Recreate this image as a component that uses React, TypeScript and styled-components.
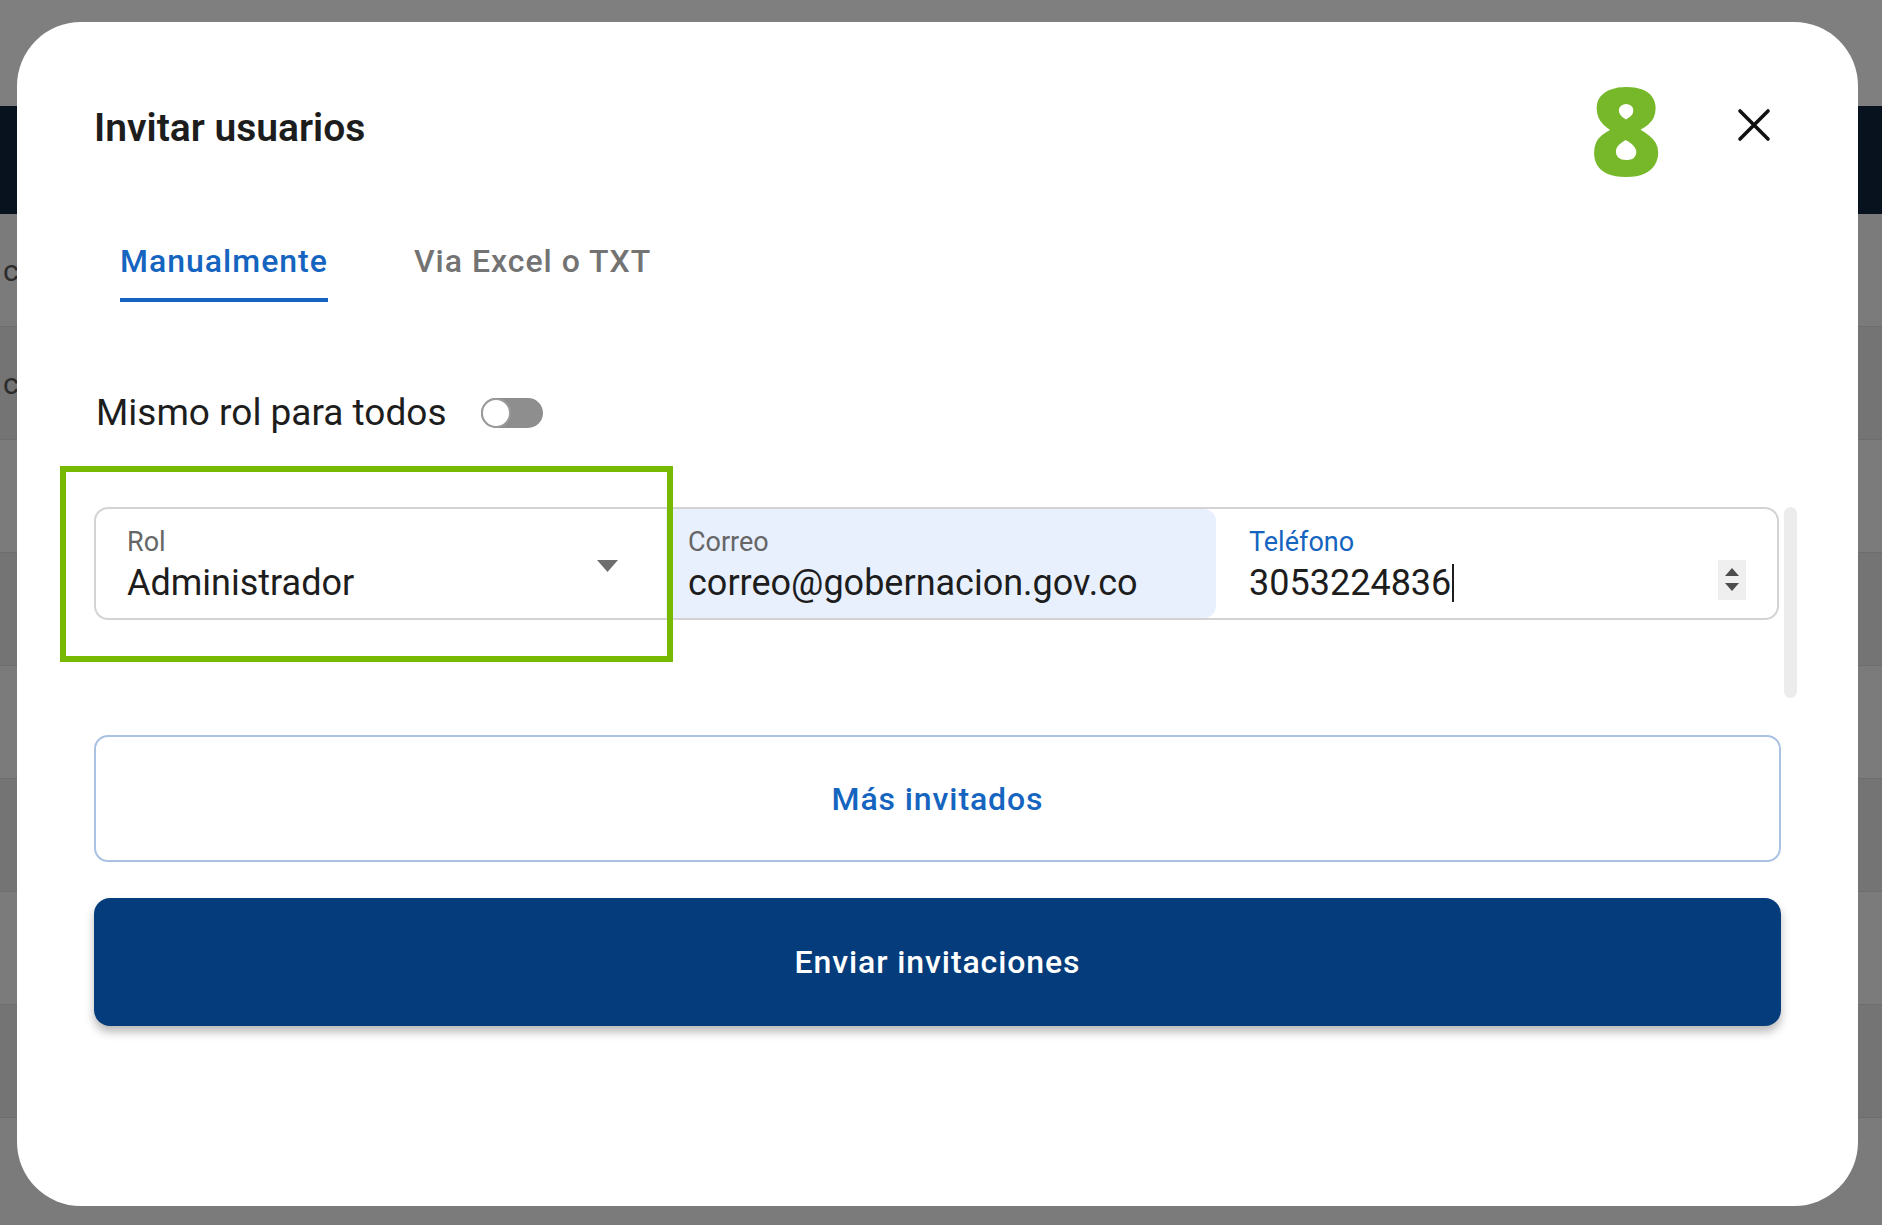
import React from 'react';
import styled, { createGlobalStyle } from 'styled-components';

const GlobalStyle = createGlobalStyle`
  html, body {
    margin: 0;
    padding: 0;
    background: #7f7f7f;
  }
  * {
    box-sizing: border-box;
  }
`;

const Page = styled.div`
  position: relative;
  width: 1882px;
  height: 1225px;
  overflow: hidden;
  background: #7f7f7f;
  display: flex;
  flex-direction: column;
  font-family: Roboto, 'Noto Sans', sans-serif;
`;

const TopStrip = styled.div`
  height: 106px;
  flex-shrink: 0;
`;

const HeaderBand = styled.div`
  height: 108px;
  flex-shrink: 0;
  background: #08111e;
`;

const BgRow = styled.div<{ $dark: boolean }>`
  height: 113px;
  flex-shrink: 0;
  display: flex;
  align-items: center;
  padding-left: 3px;
  background: ${(p) => (p.$dark ? '#747474' : '#7b7b7b')};
  border-bottom: 1px solid #6d6d6d;
  font-size: 30px;
  color: #2c2c2c;
`;

const Modal = styled.div`
  position: absolute;
  left: 17px;
  top: 22px;
  width: 1841px;
  height: 1184px;
  border-radius: 64px;
  background: #ffffff;
  padding: 0 77px;
  display: flex;
  flex-direction: column;
`;

const Header = styled.div`
  margin-top: 56px;
  height: 100px;
  display: flex;
  align-items: center;
`;

const Title = styled.h2`
  margin: 0;
  flex: 1;
  font-size: 39px;
  font-weight: 600;
  color: #1d1d1d;
`;

const StepNumber = styled.span`
  font-family: 'Open Sans', Roboto, sans-serif;
  font-size: 123px;
  font-weight: 800;
  line-height: 1;
  color: #76b82a;
  margin-top: 0;
  margin-right: 68px;
`;

const CloseButton = styled.button`
  width: 48px;
  height: 48px;
  border: none;
  background: transparent;
  padding: 0;
  display: flex;
  align-items: center;
  justify-content: center;
  margin-right: 3px;
  margin-top: -6px;
  cursor: pointer;
`;

const Tabs = styled.div`
  margin-top: 46px;
  margin-left: 26px;
  display: flex;
  gap: 86px;
`;

const Tab = styled.button<{ $active?: boolean }>`
  height: 78px;
  padding: 0;
  border: none;
  background: transparent;
  border-bottom: 4px solid ${(p) => (p.$active ? '#1565c0' : 'transparent')};
  font-family: Roboto, sans-serif;
  font-size: 32px;
  font-weight: 500;
  letter-spacing: 1px;
  color: ${(p) => (p.$active ? '#1565c0' : '#737373')};
  cursor: pointer;
`;

const ToggleRow = styled.div`
  margin-top: 85px;
  margin-left: 2px;
  height: 50px;
  display: flex;
  align-items: center;
  gap: 34px;
  font-size: 37px;
  color: #1d1d1d;
`;

const Switch = styled.span`
  width: 62px;
  height: 30px;
  border-radius: 15px;
  background: #8e8e8e;
  display: flex;
  align-items: center;
  margin-top: 2px;
`;

const Thumb = styled.span`
  width: 30px;
  height: 30px;
  border-radius: 50%;
  background: #ffffff;
  border: 2px solid #9a9a9a;
`;

const FieldsArea = styled.div`
  margin-top: 70px;
  margin-right: -16px;
  height: 191px;
  display: flex;
  gap: 5px;
`;

const FieldRow = styled.div`
  flex: 1;
  height: 113px;
  display: flex;
  border: 2px solid #d3d3d3;
  border-radius: 14px;
  overflow: hidden;
`;

const Cell = styled.div<{ $width?: number; $filled?: boolean; $pad: number }>`
  ${(p) => (p.$width ? `width: ${p.$width}px; flex-shrink: 0;` : 'flex: 1;')}
  display: flex;
  align-items: center;
  padding-left: ${(p) => p.$pad}px;
  padding-right: 31px;
  background: ${(p) => (p.$filled ? '#e8f0fe' : 'transparent')};
  border-radius: ${(p) => (p.$filled ? '0 12px 12px 0' : '0')};
`;

const FieldText = styled.div`
  flex: 1;
  display: flex;
  flex-direction: column;
  padding-top: 4px;
`;

const Label = styled.span<{ $focused?: boolean }>`
  font-size: 27px;
  line-height: 30px;
  color: ${(p) => (p.$focused ? '#1565c0' : '#666666')};
`;

const Value = styled.span`
  margin-top: 5px;
  font-size: 36px;
  line-height: 42px;
  color: #1d1d1d;
  display: flex;
  align-items: center;
`;

const Caret = styled.span`
  width: 2px;
  height: 38px;
  background: #1d1d1d;
  margin-left: 1px;
`;

const DropArrow = styled.span`
  margin-right: 17px;
  margin-top: 4px;
  display: flex;
`;

const Spinner = styled.span`
  width: 28px;
  height: 40px;
  margin-top: 32px;
  background: #efefef;
  display: flex;
  flex-direction: column;
  align-items: center;
  justify-content: center;
  gap: 7px;
`;

const ScrollTrack = styled.div`
  width: 13px;
  height: 191px;
  border-radius: 7px;
  background: #ececec;
`;

const OutlineButton = styled.button`
  margin-top: 37px;
  height: 127px;
  width: 100%;
  border: 2px solid #a9c1e2;
  border-radius: 14px;
  background: #ffffff;
  font-family: Roboto, sans-serif;
  font-size: 32px;
  font-weight: 500;
  letter-spacing: 0.9px;
  color: #1565c0;
  cursor: pointer;
`;

const PrimaryButton = styled.button`
  margin-top: 36px;
  height: 128px;
  width: 100%;
  border: none;
  border-radius: 16px;
  background: #053c7c;
  box-shadow: 0 6px 10px rgba(0, 0, 0, 0.28);
  font-family: Roboto, sans-serif;
  font-size: 32px;
  font-weight: 500;
  letter-spacing: 0.9px;
  color: #ffffff;
  cursor: pointer;
`;

const Highlight = styled.div`
  position: absolute;
  left: 43px;
  top: 444px;
  width: 613px;
  height: 196px;
  border: 6px solid #77b800;
  pointer-events: none;
`;

const bgRows = ['correo', 'correo', '', '', '', '', '', '', ''];

const App = () => {
  return (
    <Page>
      <GlobalStyle />
      <TopStrip />
      <HeaderBand />
      {bgRows.map((text, i) => (
        <BgRow key={i} $dark={i % 2 === 1}>
          {text}
        </BgRow>
      ))}

      <Modal>
        <Header>
          <Title>Invitar usuarios</Title>
          <StepNumber>8</StepNumber>
          <CloseButton aria-label="Cerrar">
            <svg width="34" height="34" viewBox="0 0 34 34">
              <path d="M3 3 L31 31 M31 3 L3 31" stroke="#111" strokeWidth="3.6" strokeLinecap="round" />
            </svg>
          </CloseButton>
        </Header>

        <Tabs>
          <Tab $active>Manualmente</Tab>
          <Tab>Via Excel o TXT</Tab>
        </Tabs>

        <ToggleRow>
          Mismo rol para todos
          <Switch>
            <Thumb />
          </Switch>
        </ToggleRow>

        <FieldsArea>
          <FieldRow>
            <Cell $width={570} $pad={31}>
              <FieldText>
                <Label>Rol</Label>
                <Value>Administrador</Value>
              </FieldText>
              <DropArrow>
                <svg width="21" height="12" viewBox="0 0 21 12">
                  <path d="M0 0 H21 L10.5 12 Z" fill="#6e6e6e" />
                </svg>
              </DropArrow>
            </Cell>
            <Cell $width={550} $filled $pad={22}>
              <FieldText>
                <Label>Correo</Label>
                <Value>correo@gobernacion.gov.co</Value>
              </FieldText>
            </Cell>
            <Cell $pad={33}>
              <FieldText>
                <Label $focused>Teléfono</Label>
                <Value>
                  3053224836
                  <Caret />
                </Value>
              </FieldText>
              <Spinner>
                <svg width="14" height="8" viewBox="0 0 14 8">
                  <path d="M0 8 L7 0 L14 8 Z" fill="#4d4d4d" />
                </svg>
                <svg width="14" height="8" viewBox="0 0 14 8">
                  <path d="M0 0 H14 L7 8 Z" fill="#4d4d4d" />
                </svg>
              </Spinner>
            </Cell>
          </FieldRow>
          <ScrollTrack />
        </FieldsArea>

        <OutlineButton>Más invitados</OutlineButton>
        <PrimaryButton>Enviar invitaciones</PrimaryButton>

        <Highlight />
      </Modal>
    </Page>
  );
};

export default App;
